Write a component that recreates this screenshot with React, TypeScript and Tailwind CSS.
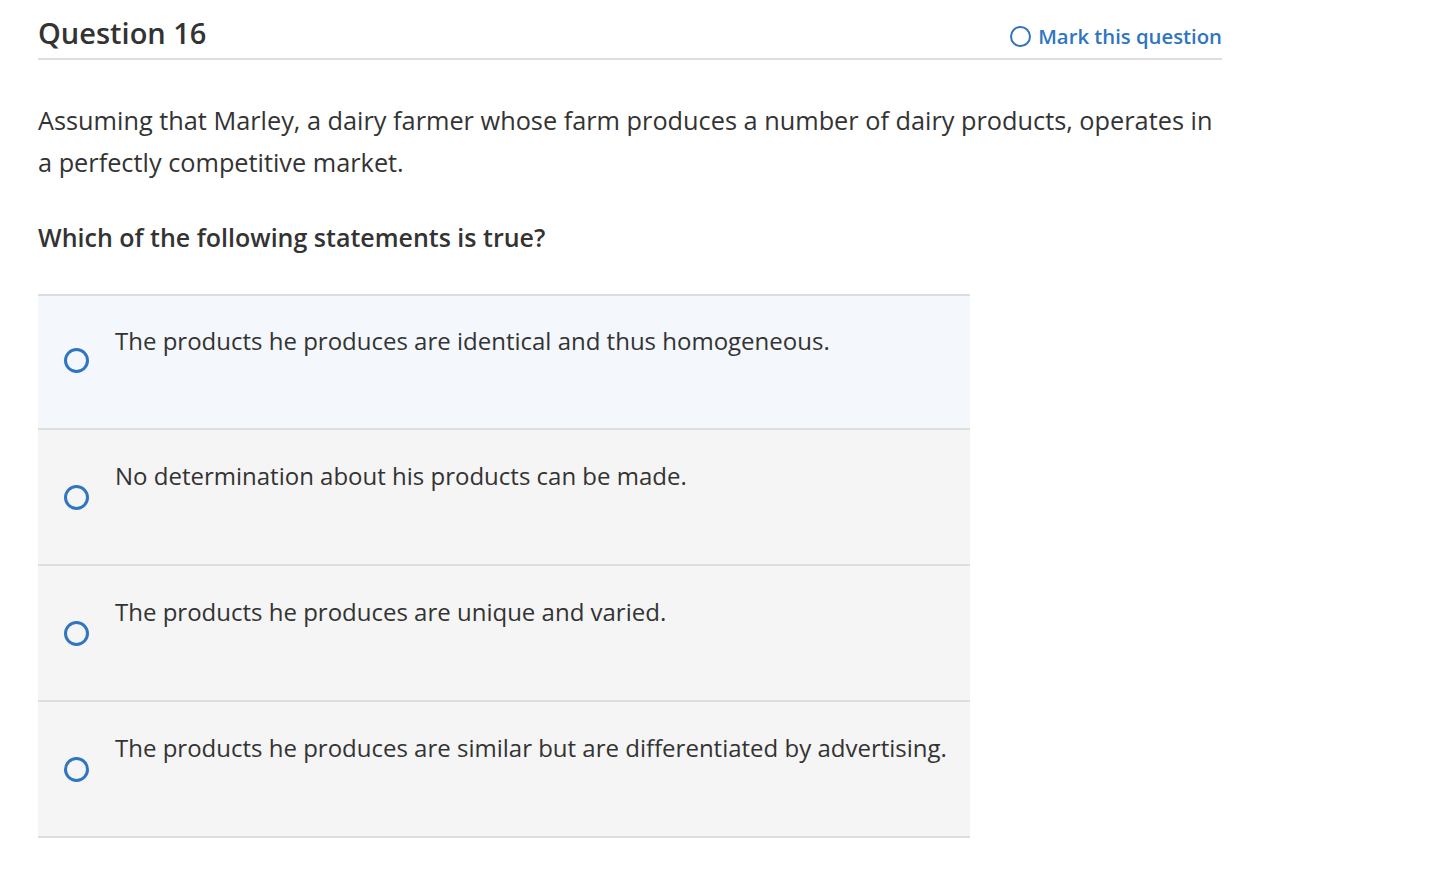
import * as React from 'react'

const options = [
  'The products he produces are identical and thus homogeneous.',
  'No determination about his products can be made.',
  'The products he produces are unique and varied.',
  'The products he produces are similar but are differentiated by advertising.'
]

function Radio({ first }: { first: boolean }): React.JSX.Element {
  return (
    <span
      className={`block h-[25px] w-[25px] shrink-0 rounded-full border-[3px] border-[#2f75c0] ${
        first ? 'mt-[21px]' : 'mt-[23px]'
      }`}
    />
  )
}

export default function App(): React.JSX.Element {
  return (
    <div className="min-h-screen bg-white px-[38px] font-['Open_Sans',sans-serif] text-[#333333]">
      <div className="w-[1184px]">
        <div className="flex h-[60px] items-end justify-between border-b-2 border-[#dddde0] pb-[7px]">
          <h1 className="text-[29px] font-semibold leading-[36px]">Question 16</h1>
          <button className="flex items-center gap-[7px] pb-[1px] text-[20.3px] font-semibold leading-[28px] text-[#2f75c0]">
            <span className="block h-[21px] w-[21px] rounded-full border-2 border-[#2f75c0]" />
            Mark this question
          </button>
        </div>

        <p className="mt-[39px] text-[25.3px] leading-[42px]">
          Assuming that Marley, a dairy farmer whose farm produces a number of dairy products, operates in a perfectly
          competitive market.
        </p>

        <p className="mt-[33px] text-[25px] font-semibold leading-[42px]">Which of the following statements is true?</p>
      </div>

      <div className="mt-[36px] w-[932px] border-b-2 border-[#dddde0]">
        {options.map((text, i) => (
          <div
            key={i}
            className={`flex items-start gap-[26px] border-t-2 border-[#dddde0] pl-[26px] ${
              i === 0 ? 'h-[134px] bg-[#f4f8fd] pt-[31px]' : 'h-[136px] bg-[#f5f5f5] pt-[32px]'
            }`}
          >
            <Radio first={i === 0} />
            <span className="text-[24px] leading-[28px]">{text}</span>
          </div>
        ))}
      </div>
    </div>
  )
}
